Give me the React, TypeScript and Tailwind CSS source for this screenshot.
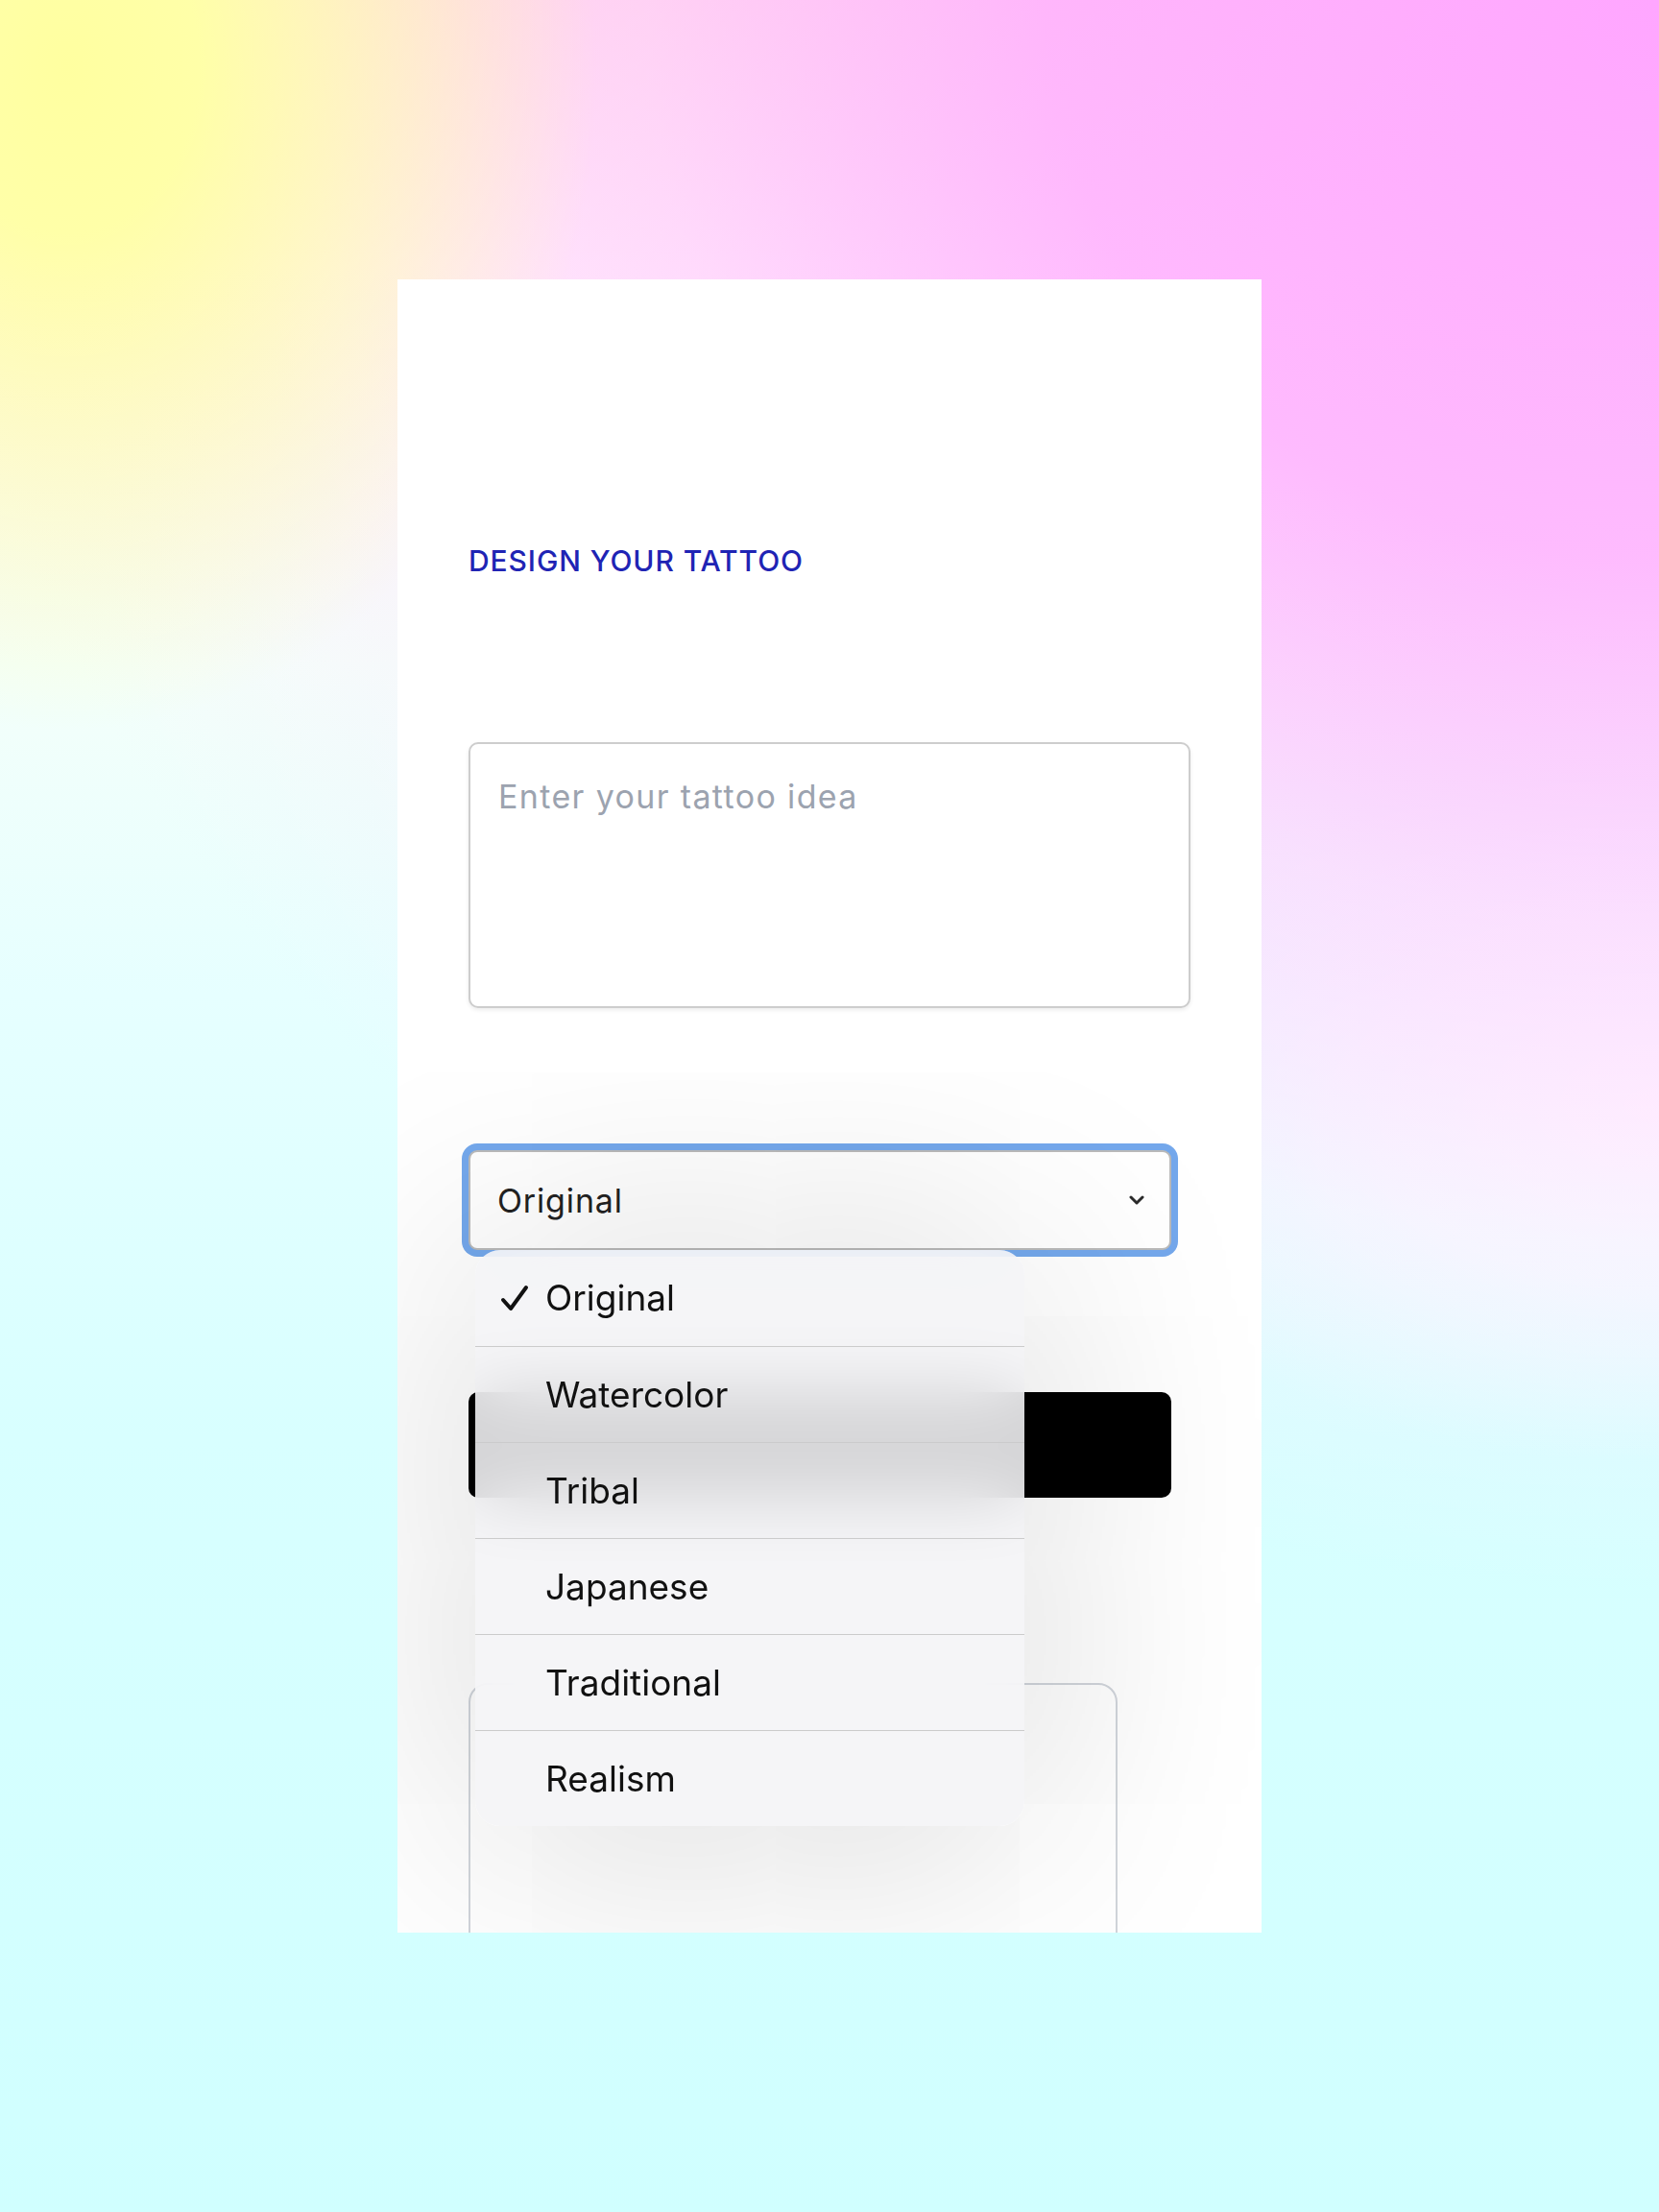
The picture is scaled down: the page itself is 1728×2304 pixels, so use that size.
import React from "react";

const options = ["Original", "Watercolor", "Tribal", "Japanese", "Traditional", "Realism"];

export default function App() {
  return (
    <div className="min-h-[2304px] w-full flex items-center justify-center bg-[image:radial-gradient(ellipse_32%_30%_at_4%_3%,#ffffa0_0%,#ffffa8_25%,rgba(255,250,200,0)_100%),radial-gradient(ellipse_105%_72%_at_100%_0%,#ffa6ff_0%,rgba(255,176,255,0.85)_35%,rgba(255,205,255,0.6)_58%,rgba(255,228,255,0.3)_78%,rgba(255,240,255,0)_100%),radial-gradient(ellipse_38%_16%_at_100%_50%,rgba(255,250,255,0.95)_0%,rgba(255,250,255,0.6)_50%,rgba(255,250,255,0)_100%),linear-gradient(180deg,#ffd8e4_0%,#ffeef8_12%,#f4fffa_30%,#e6ffff_45%,#d8ffff_65%,#d0ffff_100%)] font-['Inter',sans-serif]">
      <div className="relative w-[900px] h-[1722px] overflow-hidden bg-white px-[74px] pt-[275px]">
        <h1 className="text-[30px] leading-[36px] font-medium text-[#1f24b4] tracking-[0.03em]">
          DESIGN YOUR TATTOO
        </h1>
        <textarea
          className="mt-[171px] block w-full h-[277px] rounded-[10px] border-2 border-[#cdcdcd] bg-white px-[29px] pt-[29px] text-[34px] leading-[51px] tracking-[0.04em] text-[#222] placeholder:text-[#9ca3af] resize-none outline-none shadow-[0_2px_4px_rgba(0,0,0,0.08)]"
          placeholder="Enter your tattoo idea"
        />
        <div className="relative z-10 mt-[148px] w-[732px]">
          <div className="h-[104px] rounded-[9px] border-2 border-[#bababa] bg-white ring-[7px] ring-[#74a8ec] flex items-center justify-between pl-[28px] pr-[26px] text-[34px] tracking-[0.025em] text-[#222]">
            <span>Original</span>
            <svg width="16" height="10" viewBox="0 0 16 10" fill="none">
              <path d="M2 2 L8 8 L14 2" stroke="#2b2b2b" strokeWidth="3" strokeLinecap="round" strokeLinejoin="round" />
            </svg>
          </div>
          <div className="absolute left-[7px] top-[104px] w-[572px] rounded-[26px] overflow-hidden bg-[rgba(244,244,246,0.87)] backdrop-blur-[36px] shadow-[0_10px_300px_rgba(0,0,0,0.2)]">
            {options.map((o, i) => (
              <div
                key={o}
                className={
                  "relative h-[100px] flex items-center pl-[73px] text-[37px] text-[#111] " +
                  (i > 0 ? "border-t border-[#cbcbcb]" : "")
                }
              >
                {i === 0 && (
                  <svg width="30" height="28" viewBox="0 0 30 28" fill="none" className="absolute left-[26px] top-[36px]">
                    <path d="M3 16 L11 25 L27 3" stroke="#111" strokeWidth="4" strokeLinecap="round" strokeLinejoin="round" />
                  </svg>
                )}
                <span>{o}</span>
              </div>
            ))}
          </div>
        </div>
        <div className="mt-[148px] w-[732px] h-[110px] rounded-[10px] bg-black" />
        <div className="mt-[193px] w-[676px] h-[420px] rounded-[20px] border-2 border-[#d1d5db] bg-white" />
      </div>
    </div>
  );
}
